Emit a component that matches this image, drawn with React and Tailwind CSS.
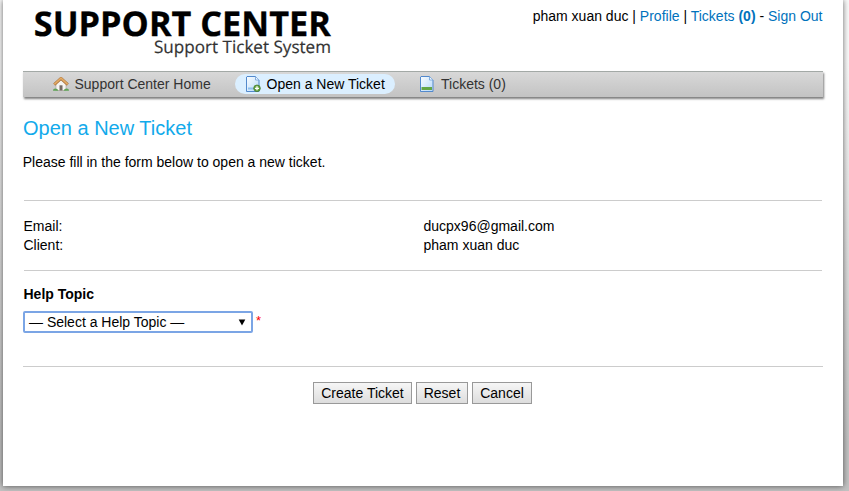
import React from "react";

function Logo() {
  return (
    <svg width="320" height="71" viewBox="0 0 320 71" className="block" role="img" textRendering="geometricPrecision">
      <text x="10.8" y="36" fontFamily="'Open Sans', sans-serif" fontWeight="700" fontSize="34" stroke="#000" strokeWidth=".3" textLength="297" lengthAdjust="spacingAndGlyphs" fill="#000">SUPPORT CENTER</text>
      <text x="131" y="52.8" fontFamily="'Open Sans', sans-serif" fontSize="17.2" stroke="#333" strokeWidth=".2" textLength="177" lengthAdjust="spacingAndGlyphs" fill="#333">Support Ticket System</text>
    </svg>
  );
}

function HomeIcon() {
  return (
    <svg width="16" height="16" viewBox="0 0 16 16" className="block shrink-0">
      <path d="M3 8 8 3.5 13 8v6.5H3z" fill="#f6f4f1" stroke="#a7a29c" strokeWidth=".6" />
      <path d="M6.5 9.3h3v5.2h-3z" fill="#756b64" />
      <path d="M1.2 8.6 8 2.4l6.8 6.2" fill="none" stroke="#a9713a" strokeWidth="2.8" strokeLinejoin="round" />
      <path d="M1.3 8.3 8 2.2l6.7 6.1" fill="none" stroke="#e3ab65" strokeWidth="1.6" strokeLinejoin="round" />
      <path d="M0 14.8c0-2.8 4.2-3 5.5 0zM10.5 14.8c1.3-3 5.5-2.8 5.5 0z" fill="#5fa357" />
    </svg>
  );
}

function PageIcon({ add }) {
  return (
    <svg width="16" height="16" viewBox="0 0 16 16" className="block shrink-0">
      <defs>
        <linearGradient id="paper" x2="1" y2="1">
          <stop stopColor="#fafdff" />
          <stop offset="1" stopColor="#b5d9fa" />
        </linearGradient>
      </defs>
      <path d="M2 .5h8.5l3.5 3.5v11.5H1.5V1z" fill="url(#paper)" stroke="#5289cc" />
      <path d="M10.5.8V4H14" fill="#eef7ff" stroke="#6c9ed8" strokeWidth=".8" />
      {add ? (
        <>
          <path d="M3 11.5h7v2H3z" fill="#8fc0ee" />
          <circle cx="12" cy="12.3" r="3.3" fill="#65a343" stroke="#467d2d" strokeWidth=".8" />
          <path d="M12 10.3v4M10 12.3h4" stroke="#fff" strokeWidth="1.3" />
        </>
      ) : (
        <path d="M2.5 11h10.5v3H2.5z" fill="#64a746" />
      )}
    </svg>
  );
}

function ActionButton({ className, children }) {
  return (
    <button className={`h-[22px] border border-[#999] bg-linear-to-b from-[#f6f6f6] to-[#dddddd] text-center leading-5 ${className}`}>
      {children}
    </button>
  );
}

export default function App() {
  return (
    <div className="h-[491px] w-[849px] overflow-hidden bg-linear-to-b from-[#fafafa] from-[12%] to-[#c2c2c2] to-[90%] pl-[3px] font-['Liberation_Sans',Arial,sans-serif] text-[14px] leading-[19px] text-black">
      <div className="h-[486px] w-[840px] bg-white px-5 shadow-[0_0_6px_rgba(0,0,0,0.6)]">
        <header className="flex h-[71px] justify-between">
          <Logo />
          <p className="mr-[0.5px] pt-[7px] whitespace-nowrap">
            pham xuan duc | <a className="text-[#0072bc]">Profile</a> | <a className="text-[#0072bc]">Tickets <b>(0)</b></a> - <a className="text-[#0072bc]">Sign Out</a>
          </p>
        </header>
        <nav className="flex h-[26px] items-start border-t border-[#a3a9a6] bg-linear-to-b from-[#d8d8d8] to-[#c3c3c3] pt-[2px] text-[#333] shadow-[0.5px_2px_2px_rgba(0,0,0,0.5)]">
          <a className="ml-5 flex h-5 w-[178px] items-center gap-[5.5px] pl-[10px] whitespace-nowrap"><HomeIcon />Support Center Home</a>
          <a className="ml-[14px] flex h-5 w-[160px] items-center gap-[5.5px] rounded-[10px] bg-[#dbefff] pl-[10px] whitespace-nowrap text-black"><PageIcon add />Open a New Ticket</a>
          <a className="ml-[24px] flex h-5 items-center gap-[6px] whitespace-nowrap"><PageIcon />Tickets (0)</a>
        </nav>
        <main>
          <h1 className="mt-[18px] h-[26px] text-[20px] leading-[26px] text-[#12aaeb]">Open a New Ticket</h1>
          <p className="mt-3 -ml-[0.3px]">Please fill in the form below to open a new ticket.</p>
          <form>
            <section className="mx-px mt-[28px] h-[70px] border-t border-[#ccc] pt-4">
              <dl className="-ml-[0.5px] grid grid-cols-[400px_1fr]">
                <dt>Email:</dt><dd>ducpx96@gmail.com</dd>
                <dt>Client:</dt><dd>pham xuan duc</dd>
              </dl>
            </section>
            <section className="mx-px h-[96px] border-t border-[#ccc] pt-[14px]">
              <label className="-ml-[0.5px] block font-bold">Help Topic</label>
              <div className="mt-[7px] -ml-px flex">
                <div className="flex h-[22px] w-[230px] items-center justify-between rounded-[2px] border-2 border-[#7ba5e5] bg-white pr-[5px] pl-[4px]">
                  <span>— Select a Help Topic —</span>
                  <svg width="8" height="7" viewBox="0 0 8 7"><path d="M.7.5h6.6L4 6.5z" fill="#000" /></svg>
                </div>
                <span className="ml-[3px] text-[13px] text-[#f00]">*</span>
              </div>
            </section>
            <div className="flex border-t border-[#ccc] pt-[15px] pl-[290px]">
              <ActionButton className="w-[99px]">Create Ticket</ActionButton>
              <ActionButton className="ml-1 w-[52px]">Reset</ActionButton>
              <ActionButton className="ml-1 w-[60px]">Cancel</ActionButton>
            </div>
          </form>
        </main>
      </div>
    </div>
  );
}
